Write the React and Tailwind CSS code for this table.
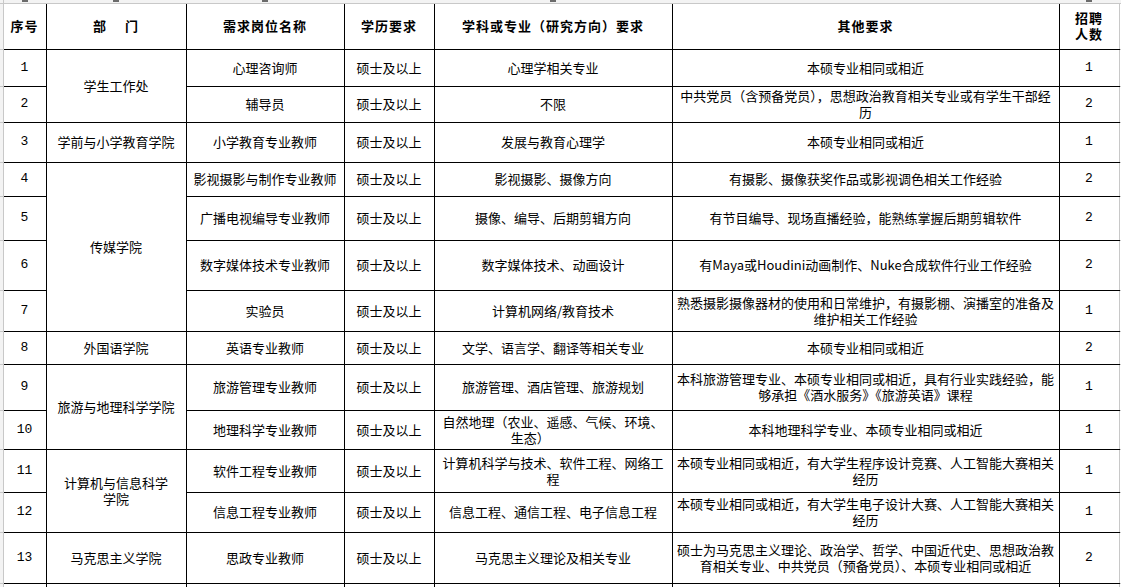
import React from "react";

const rows = [
  { n: "1", dept: { text: ["学生工作处"], span: 2 }, pos: "心理咨询师", major: ["心理学相关专业"], other: ["本硕专业相同或相近"], count: "1", h: "h-[37px]" },
  { n: "2", pos: "辅导员", major: ["不限"], other: ["中共党员（含预备党员），思想政治教育相关专业或有学生干部经", "历"], count: "2", h: "h-[36px]" },
  { n: "3", dept: { text: ["学前与小学教育学院"], span: 1 }, pos: "小学教育专业教师", major: ["发展与教育心理学"], other: ["本硕专业相同或相近"], count: "1", h: "h-[40px]" },
  { n: "4", dept: { text: ["传媒学院"], span: 4 }, pos: "影视摄影与制作专业教师", major: ["影视摄影、摄像方向"], other: ["有摄影、摄像获奖作品或影视调色相关工作经验"], count: "2", h: "h-[34px]" },
  { n: "5", pos: "广播电视编导专业教师", major: ["摄像、编导、后期剪辑方向"], other: ["有节目编导、现场直播经验，能熟练掌握后期剪辑软件"], count: "2", h: "h-[44px]" },
  { n: "6", pos: "数字媒体技术专业教师", major: ["数字媒体技术、动画设计"], other: ["有Maya或Houdini动画制作、Nuke合成软件行业工作经验"], count: "2", h: "h-[50px]" },
  { n: "7", pos: "实验员", major: ["计算机网络/教育技术"], other: ["熟悉摄影摄像器材的使用和日常维护，有摄影棚、演播室的准备及", "维护相关工作经验"], count: "1", h: "h-[41px]" },
  { n: "8", dept: { text: ["外国语学院"], span: 1 }, pos: "英语专业教师", major: ["文学、语言学、翻译等相关专业"], other: ["本硕专业相同或相近"], count: "2", h: "h-[33px]" },
  { n: "9", dept: { text: ["旅游与地理科学学院"], span: 2 }, pos: "旅游管理专业教师", major: ["旅游管理、酒店管理、旅游规划"], other: ["本科旅游管理专业、本硕专业相同或相近，具有行业实践经验，能", "够承担《酒水服务》《旅游英语》课程"], count: "1", h: "h-[46px]" },
  { n: "10", pos: "地理科学专业教师", major: ["自然地理（农业、遥感、气候、环境、", "生态）\u3000\u3000\u3000\u3000"], other: ["本科地理科学专业、本硕专业相同或相近"], count: "1", h: "h-[39px]" },
  { n: "11", dept: { text: ["计算机与信息科学", "学院"], span: 2 }, pos: "软件工程专业教师", major: ["计算机科学与技术、软件工程、网络工", "程"], other: ["本硕专业相同或相近，有大学生程序设计竞赛、人工智能大赛相关", "经历"], count: "1", h: "h-[43px]" },
  { n: "12", pos: "信息工程专业教师", major: ["信息工程、通信工程、电子信息工程"], other: ["本硕专业相同或相近，有大学生电子设计大赛、人工智能大赛相关", "经历"], count: "1", h: "h-[40px]" },
  { n: "13", dept: { text: ["马克思主义学院"], span: 1 }, pos: "思政专业教师", major: ["马克思主义理论及相关专业"], other: ["硕士为马克思主义理论、政治学、哲学、中国近代史、思想政治教", "育相关专业、中共党员（预备党员）、本硕专业相同或相近"], count: "2", h: "h-[51px]" },
];

const cell = "border border-black p-0 text-center align-middle whitespace-nowrap";
const side = "border-r border-b border-[#c8c8c8] bg-[#f3f3f3] p-0";

const Lines = ({ items }) => (
  <>
    {items.map((t, i) => (
      <div key={i} className="whitespace-pre">{t}</div>
    ))}
  </>
);

const Mark = () => <div className="mx-auto w-[6px] h-[2px] bg-[#6b6b6b]" />;

export default function App() {
  return (
    <div className="w-[1121px] h-[587px] overflow-hidden bg-white text-black font-['Noto_Sans_CJK_SC',sans-serif] text-[13px] leading-[16px]">
      <table className="table-fixed border-collapse w-[1121px]">
        <colgroup>
          <col className="w-[3px]" />
          <col className="w-[43px]" />
          <col className="w-[140px]" />
          <col className="w-[158px]" />
          <col className="w-[90px]" />
          <col className="w-[238px]" />
          <col className="w-[387px]" />
          <col className="w-[60px]" />
          <col className="w-[2px]" />
        </colgroup>
        <tbody>
          <tr className="h-[3px]">
            <td className={side}></td>
            <td className={side + " border-r-0"}><Mark /></td>
            <td className={side + " border-r-0"}><Mark /></td>
            <td className={side + " border-r-0"}><Mark /></td>
            <td className={side + " border-r-0"}></td>
            <td className={side + " border-r-0"}><Mark /></td>
            <td className={side + " border-r-0"}></td>
            <td className={side + " border-r-0"}><Mark /></td>
            <td className={side}></td>
          </tr>
          <tr className="h-[46px] font-bold tracking-[1px]">
            <td className={side}></td>
            <td className={cell}>序号</td>
            <td className={cell}>
              <span>部</span>
              <span className="ml-[18px]">门</span>
            </td>
            <td className={cell}>需求岗位名称</td>
            <td className={cell}>学历要求</td>
            <td className={cell}>学科或专业（研究方向）要求</td>
            <td className={cell}>其他要求</td>
            <td className={cell + " border-r-[#c8c8c8]"}>
              <div>招聘</div>
              <div>人数</div>
            </td>
            <td className="border-b border-[#c8c8c8] p-0"></td>
          </tr>
          {rows.map((r) => (
            <tr key={r.n} className={r.h}>
              <td className={side}></td>
              <td className={cell + " font-['Liberation_Mono',monospace]"}>{r.n}</td>
              {r.dept && (
                <td rowSpan={r.dept.span} className={cell}>
                  <Lines items={r.dept.text} />
                </td>
              )}
              <td className={cell}>{r.pos}</td>
              <td className={cell}>硕士及以上</td>
              <td className={cell}>
                <Lines items={r.major} />
              </td>
              <td className={cell}>
                <Lines items={r.other} />
              </td>
              <td className={cell + " border-r-[#c8c8c8] font-['Liberation_Mono',monospace]"}>{r.count}</td>
              <td className="border-b border-[#c8c8c8] p-0"></td>
            </tr>
          ))}
          <tr className="h-[12px]">
            <td className={side}></td>
            <td className={cell}></td>
            <td className={cell}></td>
            <td className={cell}></td>
            <td className={cell}></td>
            <td className={cell}></td>
            <td className={cell}></td>
            <td className={cell + " border-r-[#c8c8c8]"}></td>
            <td className="p-0"></td>
          </tr>
        </tbody>
      </table>
    </div>
  );
}
